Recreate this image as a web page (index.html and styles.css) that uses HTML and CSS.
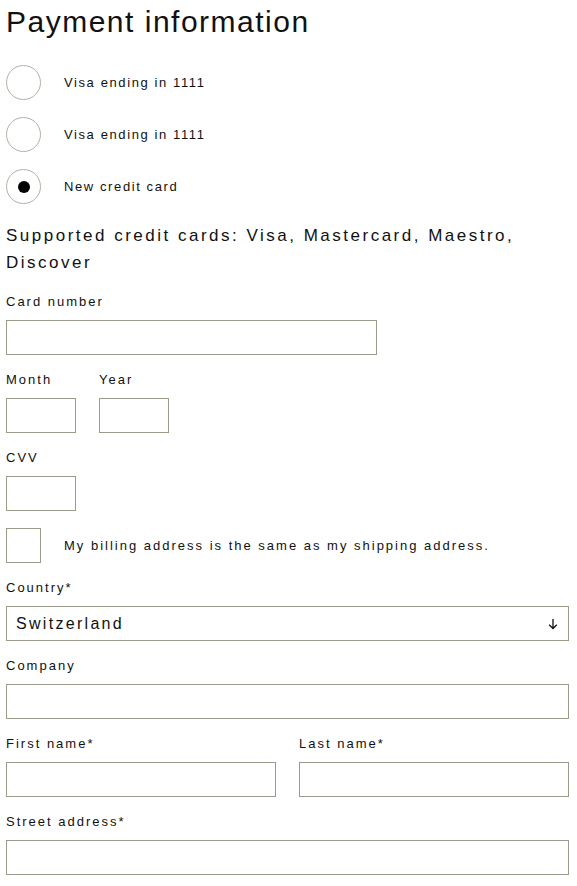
FILE: index.html
```html
<!DOCTYPE html>
<html lang="en">
<head>
<meta charset="utf-8">
<title>Payment information</title>
<link rel="stylesheet" href="styles.css">
</head>
<body>
<main class="page">
  <h1 class="title">Payment information</h1>

  <div class="radios">
    <div class="radio-row">
      <span class="radio"></span>
      <span class="opt-label">Visa ending in 1111</span>
    </div>
    <div class="radio-row">
      <span class="radio"></span>
      <span class="opt-label">Visa ending in 1111</span>
    </div>
    <div class="radio-row">
      <span class="radio radio-on"><span class="dot"></span></span>
      <span class="opt-label">New credit card</span>
    </div>
  </div>

  <p class="supported">Supported credit cards: Visa, Mastercard, Maestro, Discover</p>

  <div class="form">
    <div class="field">
      <div class="label">Card number</div>
      <div class="input input-card"></div>
    </div>

    <div class="row-small">
      <div class="field">
        <div class="label">Month</div>
        <div class="input input-small"></div>
      </div>
      <div class="field">
        <div class="label">Year</div>
        <div class="input input-small"></div>
      </div>
    </div>

    <div class="field">
      <div class="label">CVV</div>
      <div class="input input-small"></div>
    </div>

    <div class="check-row">
      <span class="checkbox"></span>
      <span class="opt-label">My billing address is the same as my shipping address.</span>
    </div>

    <div class="field">
      <div class="label">Country*</div>
      <div class="input select">
        <span class="select-value">Switzerland</span>
        <svg class="arrow" width="10" height="12" viewBox="0 0 10 12" aria-hidden="true">
          <path d="M5 1 V10.5 M1.2 6.8 L5 10.5 L8.8 6.8" fill="none" stroke="#111" stroke-width="1.3"/>
        </svg>
      </div>
    </div>

    <div class="field">
      <div class="label">Company</div>
      <div class="input"></div>
    </div>

    <div class="row-half">
      <div class="field">
        <div class="label">First name*</div>
        <div class="input"></div>
      </div>
      <div class="field">
        <div class="label">Last name*</div>
        <div class="input"></div>
      </div>
    </div>

    <div class="field">
      <div class="label">Street address*</div>
      <div class="input"></div>
    </div>
  </div>
</main>
</body>
</html>
```

FILE: styles.css
```css
html, body {
  margin: 0;
  padding: 0;
  background: #ffffff;
}

body {
  font-family: "Liberation Sans", Arial, sans-serif;
  color: #111111;
}

.page {
  padding: 0 8px 0 6px;
}

.title {
  margin: 7px 0 0;
  font-size: 30px;
  line-height: 30px;
  font-weight: 400;
  letter-spacing: 1.5px;
}

.radios {
  margin-top: 28px;
  display: flex;
  flex-direction: column;
  gap: 17px;
}

.radio-row,
.check-row {
  display: flex;
  align-items: center;
  gap: 23px;
  height: 35px;
}

.radio {
  box-sizing: border-box;
  width: 35px;
  height: 35px;
  border: 1px solid #b4b0a4;
  border-radius: 50%;
  display: flex;
  align-items: center;
  justify-content: center;
  flex: none;
}

.dot {
  width: 12px;
  height: 12px;
  border-radius: 50%;
  background: #000000;
}

.opt-label,
.label {
  font-size: 13px;
  letter-spacing: 2px;
  line-height: 16px;
}

.radio-row .opt-label {
  letter-spacing: 1.6px;
}

.supported {
  margin: 18px 0 0;
  font-size: 17px;
  line-height: 27px;
  letter-spacing: 2.5px;
}

.form {
  margin-top: 18px;
  display: flex;
  flex-direction: column;
  gap: 17px;
}

.field {
  display: flex;
  flex-direction: column;
  gap: 10px;
}

.input {
  box-sizing: border-box;
  height: 35px;
  border: 1px solid #9b9a8b;
  background: #ffffff;
}

.input-card {
  width: 371px;
}

.input-small {
  width: 70px;
}

.row-small {
  display: flex;
  gap: 23px;
}

.row-half {
  display: grid;
  grid-template-columns: 1fr 1fr;
  column-gap: 23px;
}

.checkbox {
  box-sizing: border-box;
  width: 35px;
  height: 35px;
  border: 1px solid #9b9a8b;
  flex: none;
}

.select {
  display: flex;
  align-items: center;
  justify-content: space-between;
  padding: 0 10px 0 9px;
}

.select-value {
  font-size: 16px;
  letter-spacing: 2.3px;
}

.arrow {
  display: block;
}
```
